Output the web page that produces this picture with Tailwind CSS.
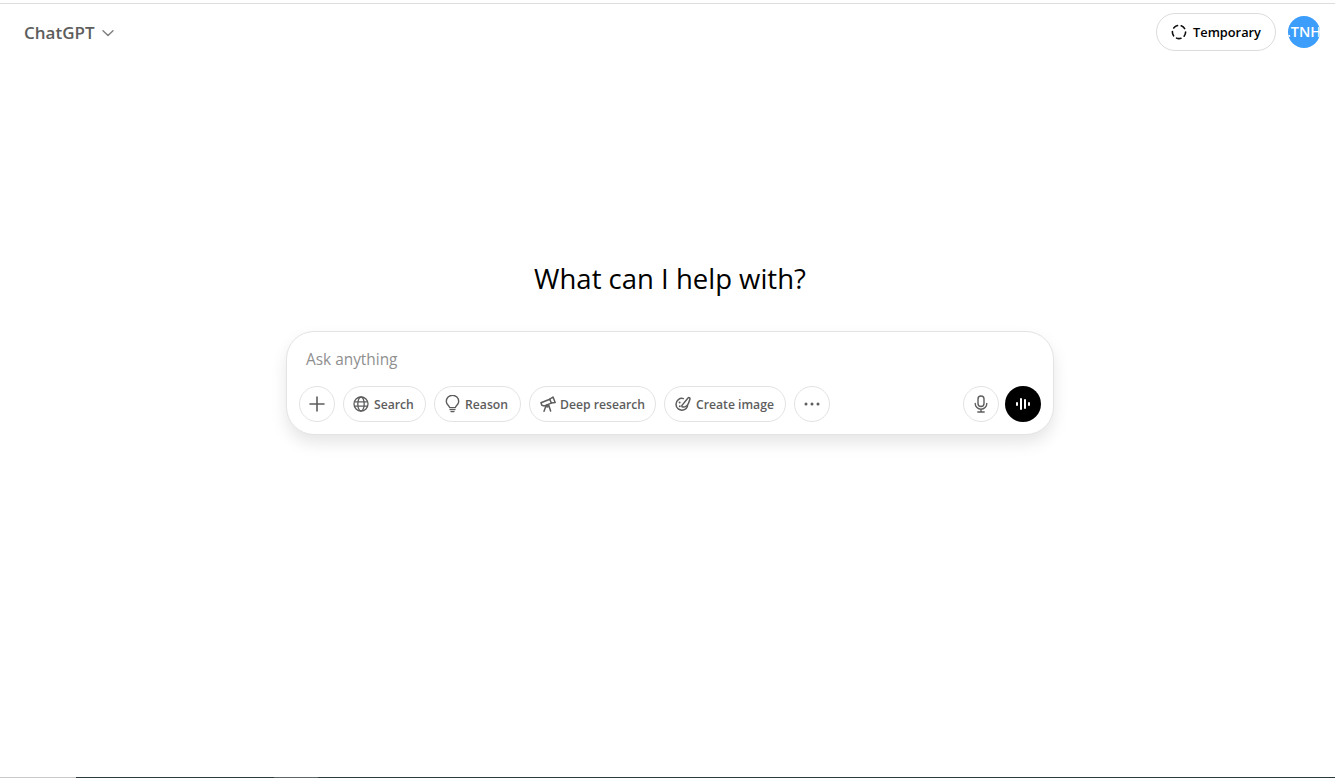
<!DOCTYPE html>
<html lang="en">
<head>
<meta charset="UTF-8">
<title>ChatGPT</title>
<script src="https://cdn.jsdelivr.net/npm/@tailwindcss/browser@4"></script>
</head>
<body class="bg-white">
<div class="flex h-[778px] w-[1335px] flex-col overflow-hidden bg-white font-['Open_Sans','Noto_Sans',sans-serif] text-black">
  <!-- top edge -->
  <div class="mt-[3px] h-px shrink-0 bg-[#dedede]"></div>

  <!-- header -->
  <header class="flex h-[56px] shrink-0 items-center justify-between pl-6 pr-[15px]">
    <div class="flex items-center gap-[6px] text-[#5d5d5d]">
      <span class="pt-px text-[17px] font-semibold leading-none">ChatGPT</span>
      <svg class="mt-px" width="14" height="14" viewBox="0 0 14 14" fill="none" stroke="#7d7d7d" stroke-width="1.4" stroke-linecap="round" stroke-linejoin="round"><path d="M2 4.8 7 9.6l5-4.8"/></svg>
    </div>
    <div class="flex items-center gap-3">
      <button class="flex h-[38px] w-[120px] items-center justify-center gap-[6px] rounded-full border border-[#dcdcdc] bg-white text-[12.8px] leading-[20px] font-semibold">
        <svg width="16" height="16" viewBox="0 0 16 16" fill="none" stroke="#0d0d0d" stroke-width="1.6" stroke-dasharray="4.5 3.79" stroke-linecap="round"><circle cx="8" cy="8" r="6.6"/></svg>
        <span>Temporary</span>
      </button>
      <div class="flex h-8 w-8 items-center justify-center overflow-hidden rounded-full bg-[#3c9dfa] text-[14.5px] font-semibold whitespace-nowrap text-white">.TNH</div>
    </div>
  </header>

  <!-- main -->
  <main class="flex flex-1 flex-col items-center pl-[5px]">
    <h1 class="mt-[199px] text-[27.5px] leading-[40px] font-normal">What can I help with?</h1>
    <div class="mt-[32px] flex h-[104px] w-[768px] flex-col justify-between rounded-[28px] border border-[#e3e3e3] bg-white pt-[18px] pr-3 pb-3 pl-3 shadow-[0_8px_16px_rgba(0,0,0,0.1)]">
      <div class="pl-[7px] text-[15.4px] leading-[20px] text-[#8f8f8f]">Ask anything</div>
      <div class="flex items-center justify-between">
        <div class="flex items-center gap-2 text-[12.2px] font-semibold text-[#5d5d5d]">
          <button class="flex h-9 w-9 items-center justify-center rounded-full border border-[#e3e3e3]">
            <svg width="18" height="18" viewBox="0 0 18 18" fill="none" stroke="#5d5d5d" stroke-width="1.6" stroke-linecap="round"><path d="M9 2v14M2 9h14"/></svg>
          </button>
          <button class="flex h-9 w-[83px] items-center gap-[5px] rounded-full border border-[#e3e3e3] pl-[9px]">
            <svg width="16" height="16" viewBox="0 0 16 16" fill="none" stroke="#5d5d5d" stroke-width="1.3"><circle cx="8" cy="8" r="7"/><ellipse cx="8" cy="8" rx="3.2" ry="7"/><path d="M1.2 5.8h13.6M1.2 10.2h13.6"/></svg>
            <span class="pt-[2px]">Search</span>
          </button>
          <button class="flex h-9 w-[87px] items-center gap-[5px] rounded-full border border-[#e3e3e3] pl-[10px]">
            <svg width="15" height="18" viewBox="0 0 15 18" fill="none" stroke="#5d5d5d" stroke-width="1.4" stroke-linecap="round" stroke-linejoin="round"><path d="M4.6 12.6c0-1.6-3.3-3-3.3-6.1a6.2 6.2 0 0 1 12.4 0c0 3.1-3.3 4.500-3.3 6.100z"/><path d="M5 14.600h5M6 16.600h3"/></svg>
            <span class="pt-[2px]">Reason</span>
          </button>
          <button class="flex h-9 w-[127px] items-center gap-1 rounded-full border border-[#e3e3e3] pl-[10px]">
            <svg width="16" height="16" viewBox="0 0 16 16" fill="none" stroke="#5d5d5d" stroke-width="1.5" stroke-linecap="round" stroke-linejoin="round"><path d="M1 6.800 9.800 3.200l1.500 3.900-7 2.800-2.500-.6z"/><path d="M9.800 3.200 13 1l2.200 5.500-3.900.6"/><path d="m6 9.700-2 5.500M8.600 8.800l2 6.200"/><circle cx="7.300" cy="10" r="1"/></svg>
            <span class="pt-[2px]">Deep research</span>
          </button>
          <button class="flex h-9 w-[122px] items-center gap-[5px] rounded-full border border-[#e3e3e3] pl-[10px]">
            <svg width="16" height="16" viewBox="0 0 16 16" fill="none" stroke="#5d5d5d" stroke-width="1.5" stroke-linecap="round" stroke-linejoin="round"><path d="M8.400 2.600C4.800 1.600 1 4.300 1 8.300c0 3.900 3.500 6.500 7.200 5.800 2.500-.5 4-2.300 4.400-4.400"/><path d="M6.800 9.600 13 2c.8-.9 2.200-.2 2 1l-1.400 4c-1 2.900-3.700 4.900-6.600 3.700z"/><path d="M4.600 6.400h.01M4.800 10.200h.01" stroke-width="2"/></svg>
            <span class="pt-[2px]">Create image</span>
          </button>
          <button class="flex h-9 w-9 items-center justify-center rounded-full border border-[#e3e3e3]">
            <svg width="16" height="4" viewBox="0 0 16 4" fill="#5d5d5d"><circle cx="2" cy="2" r="1.500"/><circle cx="8" cy="2" r="1.500"/><circle cx="14" cy="2" r="1.500"/></svg>
          </button>
        </div>
        <div class="flex items-center gap-[6px]">
          <button class="flex h-9 w-9 items-center justify-center rounded-full border border-[#e3e3e3]">
            <svg width="14" height="18" viewBox="0 0 14 18" fill="none" stroke="#5d5d5d" stroke-width="1.4" stroke-linecap="round"><rect x="4" y="1" width="6" height="10.500" rx="3"/><path d="M1.200 8.500a5.800 5.800 0 0 0 11.600 0M7 14.300v2.700M3.800 17h6.400"/></svg>
          </button>
          <button class="flex h-9 w-9 items-center justify-center rounded-full bg-black">
            <svg width="16" height="16" viewBox="0 0 16 16" fill="none" stroke="#fff" stroke-width="2" stroke-linecap="round"><path d="M2 7v2M6 3v10M10 4v8M14 7v2"/></svg>
          </button>
        </div>
      </div>
    </div>
  </main>

  <!-- bottom edge -->
  <div class="flex h-px shrink-0">
    <div class="w-[76px] bg-[#c8c8c8]"></div>
    <div class="w-[198px] bg-[#2b3a3c]"></div>
    <div class="w-[44px] bg-[#5a6668]"></div>
    <div class="flex-1 bg-[#2b3a3c]"></div>
  </div>
</div>
</body>
</html>
